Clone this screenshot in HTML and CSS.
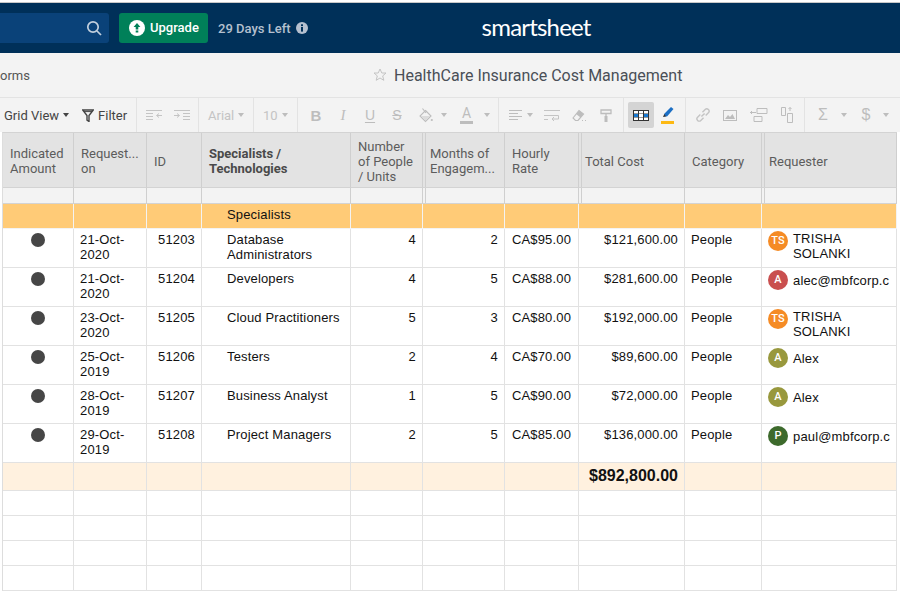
FILE: index.html
```html
<!DOCTYPE html>
<html lang="en">
  <head>
    <meta charset="UTF-8" />
    <title>HealthCare Insurance Cost Management</title>
    <link rel="stylesheet" href="styles.css">
  </head>
  <body>
    <header class="topbar">
      <div class="search">
        <svg width="16" height="16" viewBox="0 0 16 16" fill="none" stroke="#c3d0de" stroke-width="1.7"><circle cx="7" cy="7" r="5.2"/><path d="M11 11l4 4"/></svg>
      </div>
      <div class="upgrade">
        <svg width="16" height="16" viewBox="0 0 16 16"><circle cx="8" cy="8" r="8" fill="#fff"/><path d="M8 3l3.4 4H9.3v2.6H6.7V7H4.6z M6.7 10.6h2.6v1.8H6.7z" fill="#008059"/></svg>
        <span class="upgrade-text">Upgrade</span>
      </div>
      <div class="days">29 Days Left</div>
      <svg class="info" width="12" height="12" viewBox="0 0 12 12"><circle cx="6" cy="6" r="6" fill="#b5c0cf"/><rect x="5" y="5" width="2" height="4.6" fill="#003059"/><rect x="5" y="2.3" width="2" height="1.8" fill="#003059"/></svg>
      <div class="logo">smartsheet</div>
    </header>

    <div class="subbar">
      <span class="tab">orms</span>
      <svg class="star" width="14" height="14" viewBox="0 0 14 14" fill="none" stroke="#c4c4c4"><path d="M7 1l1.8 4h4.2l-3.3 2.9 1.1 4.4L7 10l-3.8 2.3 1.1-4.4L1 5h4.2z"/></svg>
      <span class="sheet-title">HealthCare Insurance Cost Management</span>
    </div>

    <div class="toolbar">
      <div class="tool-group first">
        <span class="tool-text">Grid View</span><i class="caret dark"></i>
        <svg class="filter-icon" width="12" height="13" viewBox="0 0 12 13" fill="none" stroke="#444" stroke-width="1.4"><path d="M.7 1h10.600L7 6.500v6L5 11.200V6.500z"/><path d="M2 2.600h8" stroke-width="1"/></svg>
        <span class="tool-text">Filter</span>
      </div>
      <div class="tool-group indent">
        <svg width="17" height="11" viewBox="0 0 17 11" fill="none" stroke="#c4c4c4"><path d="M0 .5h16M0 3.5h7M0 6.5h7M0 9.5h7M16 5.5h-5M13 3.500l-2.500 2 2.500 2"/></svg>
        <svg width="17" height="11" viewBox="0 0 17 11" fill="none" stroke="#c4c4c4"><path d="M1 .5h16M10 3.5h7M10 6.5h7M10 9.5h7M1 5.500h5M4 3.500l2.500 2-2.500 2"/></svg>
      </div>
      <div class="tool-group font-name"><span class="tool-text off">Arial</span><i class="caret"></i></div>
      <div class="tool-group font-size"><span class="tool-text off">10</span><i class="caret"></i></div>
      <div class="tool-group styles">
        <span class="glyph bold">B</span>
        <span class="glyph italic">I</span>
        <span class="glyph under">U</span>
        <span class="glyph strike">S</span>
        <svg class="bucket" width="14" height="15" viewBox="0 0 14 15" fill="none" stroke="#bdbdbd" stroke-width="1.1"><path d="M6.500 2.500L12 8l-5.500 5.500L1 8z"/><path d="M2 8h9l-4.500 4.500z" fill="#dcdcdc" stroke="none"/><path d="M3.500 .5L7 5"/><circle cx="12.800" cy="12" r="1.100" fill="#bdbdbd" stroke="none"/></svg>
        <i class="caret bucket-caret"></i>
        <span class="text-color">A</span>
        <i class="caret color-caret"></i>
      </div>
      <div class="tool-group align">
        <svg width="14" height="11" viewBox="0 0 14 11" stroke="#bdbdbd"><path d="M0 .5h13M0 3.500h9M0 6.500h13M0 9.500h9"/></svg>
        <i class="caret"></i>
        <svg class="wrap" width="16" height="11" viewBox="0 0 16 11" fill="none" stroke="#c4c4c4"><path d="M0 .5h16M0 5.500h14.500v3.500H8M0 9.500h4M10 7l-2 2 2 2"/></svg>
        <svg class="eraser" width="15" height="13" viewBox="0 0 15 13" fill="none" stroke="#bdbdbd" stroke-width="1.200"><path d="M1 9l6-7.500 4.500 3.500L6 11.500H3.500z"/><path d="M7 1.500l4.500 3.500L8.500 8.500 4 5z" fill="#bdbdbd" stroke="none"/><path d="M10 11.500h1M13 11.500h1"/></svg>
        <svg width="12" height="13" viewBox="0 0 12 13" fill="none" stroke="#bdbdbd" stroke-width="1.300"><path d="M1 1h10v3.500H1zM6 4.500V7"/><path d="M4.500 7h3v6h-3z" fill="#bdbdbd" stroke="none"/></svg>
      </div>
      <div class="tool-group modes">
        <span class="mode-on">
          <svg width="16" height="11" viewBox="0 0 16 11"><rect width="16" height="11" fill="#333"/><path d="M1 1h4v2.500H1zM6 1h4v2.500H6zM11 1h4v2.500h-4zM1 7.500h4V10H1zM6 7.500h4V10H6zM11 7.500h4V10h-4z" fill="#fff"/><path d="M1 4h4v3H1zM11 4h4v3h-4z" fill="#1878d0"/><path d="M6 4h4v3H6z" fill="#fff"/></svg>
        </span>
        <span class="highlight">
          <svg width="12" height="13" viewBox="0 0 12 13"><path d="M9 0l2.500 2L5 9.500l-3-.2.300-2.500z" fill="#1c6fc4"/><path d="M2.300 7l-1.300 3 3-.500z" fill="#333"/></svg>
          <i class="hl-bar"></i>
        </span>
      </div>
      <div class="tool-group insert">
        <svg width="14" height="14" viewBox="1 1 13 13" fill="none" stroke="#c4c4c4" stroke-width="1.300"><path d="M6 9l3-3M5 7L2.500 9.500a2 2 0 0 0 3 3L8 10M7 5l2.500-2.500a2 2 0 0 1 3 3L10 8"/></svg>
        <svg width="14" height="11" viewBox="0 0 14 11"><rect x=".5" y=".5" width="13" height="10" fill="none" stroke="#bdbdbd"/><path d="M2 9l3-4 2 2 2.500-3L12 9z" fill="#bdbdbd"/></svg>
        <svg width="18" height="14" viewBox="0 0 18 14" fill="none" stroke="#bdbdbd"><path d="M7 .5h10v5H7zM4 8.500h8v5H4zM0 4.500h6M2 3L.5 4.500 2 6"/></svg>
        <svg width="12" height="16" viewBox="0 0 12 16" fill="none" stroke="#bdbdbd"><path d="M.5 .5h4v8h-4zM6.500 6.500h5v9h-5zM9 .5V4M7.500 2L9 .5 10.500 2"/></svg>
      </div>
      <div class="tool-group calc">
        <span class="glyph sigma">Σ</span>
        <i class="caret"></i>
        <span class="glyph dollar">$</span>
        <i class="caret"></i>
      </div>
    </div>

    <table class="sheet">
      <colgroup>
        <col class="c-ind"><col class="c-req"><col class="c-id"><col class="c-spec"><col class="c-num"><col class="c-mon"><col class="c-rate"><col class="c-cost"><col class="c-cat"><col class="c-who">
      </colgroup>
      <thead>
        <tr class="head">
          <th>Indicated<br>Amount</th>
          <th>Request...<br>on</th>
          <th>ID</th>
          <th class="primary">Specialists /<br>Technologies</th>
          <th>Number<br>of People<br>/ Units</th>
          <th class="dbl">Months of<br>Engagem...</th>
          <th>Hourly<br>Rate</th>
          <th class="dbl cost-head">Total Cost</th>
          <th>Category</th>
          <th class="dbl">Requester</th>
        </tr>
        <tr class="filters">
          <th></th><th></th><th></th><th></th><th></th><th class="dbl"></th><th></th><th class="dbl"></th><th></th><th class="dbl"></th>
        </tr>
      </thead>
      <tbody>
        <tr class="group">
          <td></td><td></td><td></td><td class="name">Specialists</td><td></td><td></td><td></td><td></td><td></td><td></td>
        </tr>
        <tr>
          <td class="dot-cell"><i class="dot"></i></td><td>21-Oct-2020</td><td class="id">51203</td><td class="name">Database Administrators</td><td class="num">4</td><td class="num">2</td><td class="rate">CA$95.00</td><td class="num">$121,600.00</td><td>People</td>
          <td><div class="who"><span class="avatar orange">TS</span><span>TRISHA SOLANKI</span></div></td>
        </tr>
        <tr>
          <td class="dot-cell"><i class="dot"></i></td><td>21-Oct-2020</td><td class="id">51204</td><td class="name">Developers</td><td class="num">4</td><td class="num">5</td><td class="rate">CA$88.00</td><td class="num">$281,600.00</td><td>People</td>
          <td><div class="who"><span class="avatar red">A</span><span class="one-line">alec@mbfcorp.c</span></div></td>
        </tr>
        <tr>
          <td class="dot-cell"><i class="dot"></i></td><td>23-Oct-2020</td><td class="id">51205</td><td class="name">Cloud Practitioners</td><td class="num">5</td><td class="num">3</td><td class="rate">CA$80.00</td><td class="num">$192,000.00</td><td>People</td>
          <td><div class="who"><span class="avatar orange">TS</span><span>TRISHA SOLANKI</span></div></td>
        </tr>
        <tr>
          <td class="dot-cell"><i class="dot"></i></td><td>25-Oct-2019</td><td class="id">51206</td><td class="name">Testers</td><td class="num">2</td><td class="num">4</td><td class="rate">CA$70.00</td><td class="num">$89,600.00</td><td>People</td>
          <td><div class="who"><span class="avatar olive">A</span><span class="one-line">Alex</span></div></td>
        </tr>
        <tr>
          <td class="dot-cell"><i class="dot"></i></td><td>28-Oct-2019</td><td class="id">51207</td><td class="name">Business Analyst</td><td class="num">1</td><td class="num">5</td><td class="rate">CA$90.00</td><td class="num">$72,000.00</td><td>People</td>
          <td><div class="who"><span class="avatar olive">A</span><span class="one-line">Alex</span></div></td>
        </tr>
        <tr>
          <td class="dot-cell"><i class="dot"></i></td><td>29-Oct-2019</td><td class="id">51208</td><td class="name">Project Managers</td><td class="num">2</td><td class="num">5</td><td class="rate">CA$85.00</td><td class="num">$136,000.00</td><td>People</td>
          <td><div class="who"><span class="avatar green">P</span><span class="one-line">paul@mbfcorp.c</span></div></td>
        </tr>
        <tr class="total">
          <td></td><td></td><td></td><td></td><td></td><td></td><td></td><td class="num">$892,800.00</td><td></td><td></td>
        </tr>
        <tr class="blank"><td></td><td></td><td></td><td></td><td></td><td></td><td></td><td></td><td></td><td></td></tr>
        <tr class="blank"><td></td><td></td><td></td><td></td><td></td><td></td><td></td><td></td><td></td><td></td></tr>
        <tr class="blank"><td></td><td></td><td></td><td></td><td></td><td></td><td></td><td></td><td></td><td></td></tr>
        <tr class="blank"><td></td><td></td><td></td><td></td><td></td><td></td><td></td><td></td><td></td><td></td></tr>
      </tbody>
    </table>
  </body>
</html>
```

FILE: styles.css
```css
html,
body {
  margin: 0;
  padding: 0;
  height: 594px;
  overflow: hidden;
  background-color: #fff;
}

body {
  font-family: "Roboto", sans-serif;
  padding-top: 3px;
  box-sizing: border-box;
}

.topbar {
  height: 50px;
  background-color: #003059;
  box-shadow: 0 -1px 0 #c8c8c8;
  display: flex;
  align-items: center;
  color: #fff;
}

.search {
  width: 109px;
  height: 30px;
  background-color: #0a4279;
  border-radius: 0 3px 3px 0;
  display: flex;
  align-items: center;
  justify-content: flex-end;
  padding-right: 7px;
  box-sizing: border-box;
}

.upgrade {
  margin-left: 10px;
  width: 89px;
  height: 30px;
  background-color: #008059;
  border-radius: 3px;
  display: flex;
  align-items: center;
  padding-left: 10px;
  box-sizing: border-box;
  gap: 5px;
  font-size: 13px;
  font-weight: 500;
}

.upgrade-text {
  padding-bottom: 2px;
}

.days {
  margin-left: 10px;
  font-size: 13px;
  font-weight: 500;
  color: #b5c0cf;
}

.info {
  margin-left: 5px;
}

.logo {
  margin-left: 174px;
  font-family: "Lato", sans-serif;
  font-size: 24px;
  letter-spacing: -0.8px;
  line-height: 24px;
  margin-top: -2px;
}

.subbar {
  height: 44px;
  background-color: #f3f3f3;
  display: flex;
  align-items: center;
  font-size: 13px;
  color: #555;
}

.tab {
  width: 373px;
}

.star {
  margin-right: 7px;
}

.sheet-title {
  font-size: 16px;
  color: #4a4f57;
}

.toolbar {
  height: 35px;
  background-color: #f3f3f3;
  border-top: 1px solid #e3e3e3;
  box-sizing: border-box;
  display: flex;
  align-items: stretch;
}

.tool-group {
  display: flex;
  align-items: center;
  border-right: 1px solid #e3e3e3;
  box-sizing: border-box;
  flex: none;
}

.first {
  width: 137px;
  padding-left: 4px;
}

.tool-text {
  font-size: 13px;
  color: #444;
}

.tool-text.off {
  color: #c4c4c4;
}

.caret {
  width: 0;
  height: 0;
  border-left: 3px solid transparent;
  border-right: 3px solid transparent;
  border-top: 4px solid #bdbdbd;
  margin-left: 4px;
}

.caret.dark {
  border-top-color: #444;
}

.filter-icon {
  margin: 0 4px 0 13px;
}

.indent {
  width: 62px;
  padding-left: 9px;
  gap: 10px;
}

.font-name {
  width: 55px;
  padding-left: 9px;
}

.font-size {
  width: 44px;
  padding-left: 9px;
}

.styles {
  width: 201px;
  padding-left: 11px;
}

.glyph {
  color: #bdbdbd;
  font-family: "Liberation Sans", sans-serif;
  font-size: 14px;
  width: 14px;
  text-align: center;
}

.bold {
  font-size: 15px;
  font-weight: bold;
  margin-right: 13px;
}

.italic {
  font-family: "Liberation Serif", serif;
  font-style: italic;
  font-size: 15px;
  margin-right: 13px;
}

.under {
  text-decoration: underline;
  text-underline-offset: 2px;
  margin-right: 13px;
}

.strike {
  text-decoration: line-through;
  margin-right: 15px;
}

.bucket-caret {
  margin-left: 8px;
}

.text-color {
  margin-left: 13px;
  width: 13px;
  border-bottom: 3px solid #bdbdbd;
  font-size: 14px;
  line-height: 15px;
  text-align: center;
  color: #bdbdbd;
}

.color-caret {
  margin-left: 11px;
}

.align {
  width: 125px;
  padding-left: 10px;
}

.wrap {
  margin-left: 11px;
}

.eraser {
  margin: 0 13px 0 12px;
}

.modes {
  width: 62px;
  padding-left: 4px;
}

.mode-on {
  width: 26px;
  height: 26px;
  background-color: #d4d4d4;
  border-radius: 2px;
  display: flex;
  align-items: center;
  justify-content: center;
}

.highlight {
  margin-left: 7px;
  display: flex;
  flex-direction: column;
  width: 13px;
  align-items: center;
}

.hl-bar {
  width: 13px;
  height: 3px;
  background-color: #fdb913;
  margin-top: 1px;
}

.insert {
  width: 119px;
  padding-left: 10px;
  gap: 13px;
}

.calc {
  width: 95px;
  padding-left: 11px;
  border-right: 0;
}

.sigma {
  font-size: 16px;
  margin-right: 7px;
}

.dollar {
  font-size: 16px;
  margin-left: 12px;
  margin-right: 6px;
}

.sheet {
  border-collapse: separate;
  border-spacing: 0;
  table-layout: fixed;
  width: 895px;
  margin-left: 2px;
  border-left: 1px solid #ddd;
  border-top: 1px solid #d3d3d3;
  font-family: "Liberation Sans", sans-serif;
  font-size: 13px;
  color: #111;
}

.c-ind { width: 71px; }
.c-req { width: 73px; }
.c-id { width: 55px; }
.c-spec { width: 149px; }
.c-num { width: 72px; }
.c-mon { width: 82px; }
.c-rate { width: 74px; }
.c-cost { width: 106px; }
.c-cat { width: 77px; }
.c-who { width: 135px; }

th {
  font-family: "Roboto", sans-serif;
  font-weight: 400;
  text-align: left;
  color: #5c5c5c;
  background-color: #e3e3e3;
  border-right: 1px solid #cfcfcf;
  border-bottom: 1px solid #d3d3d3;
  padding: 2px 7px 0;
  line-height: 15px;
  box-sizing: border-box;
}

.head th {
  height: 55px;
  font-size: 13px;
}

.filters th {
  height: 16px;
  padding: 0;
  background-color: #f3f3f3;
  border-bottom: 1px solid #d3d3d3;
}

th.dbl {
  box-shadow: inset 2px 0 0 #e3e3e3, inset 3px 0 0 #cfcfcf;
  padding-left: 7px;
}

th.cost-head {
  padding-left: 6px;
}

.filters th.dbl {
  box-shadow: inset 2px 0 0 #f3f3f3, inset 3px 0 0 #cfcfcf;
}

.primary {
  font-weight: 700;
  color: #4a4a4a;
}

td {
  border-right: 1px solid #e2e2e2;
  border-bottom: 1px solid #e2e2e2;
  padding: 3px 6px 0;
  vertical-align: top;
  line-height: 15px;
  height: 39px;
  box-sizing: border-box;
  letter-spacing: 0.15px;
  overflow: hidden;
}

.group td {
  height: 25px;
  background-color: #ffcb77;
  vertical-align: middle;
  padding-top: 0;
  padding-bottom: 3px;
  border-color: #f3f3f3;
}

.name {
  padding-left: 25px;
}

.id {
  text-align: right;
  padding-right: 6px;
}

.num {
  text-align: right;
  padding-right: 6px;
}

.rate {
  padding-left: 7px;
}

.dot-cell {
  text-align: center;
  padding: 4px 0 0;
}

.dot {
  display: inline-block;
  width: 14px;
  height: 14px;
  border-radius: 50%;
  background-color: #464646;
}

.who {
  display: flex;
  align-items: flex-start;
  gap: 5px;
  margin-top: -1px;
}

.one-line {
  white-space: nowrap;
  padding-top: 3px;
}

.avatar {
  flex: none;
  width: 20px;
  height: 20px;
  border-radius: 50%;
  color: #fff;
  font-family: "Roboto", sans-serif;
  font-size: 11px;
  font-weight: 500;
  line-height: 19px;
  text-align: center;
  letter-spacing: 0;
}

.orange { background-color: #f58b25; }
.red { background-color: #c94f4f; }
.olive { background-color: #98983d; }
.green { background-color: #3d6a2c; }

.total td {
  height: 28px;
  background-color: #fff1df;
  vertical-align: middle;
  padding-top: 0;
  padding-bottom: 2px;
  font-size: 16px;
  font-weight: 700;
  letter-spacing: 0;
}

.blank td {
  height: 25px;
  padding: 0;
}
```
